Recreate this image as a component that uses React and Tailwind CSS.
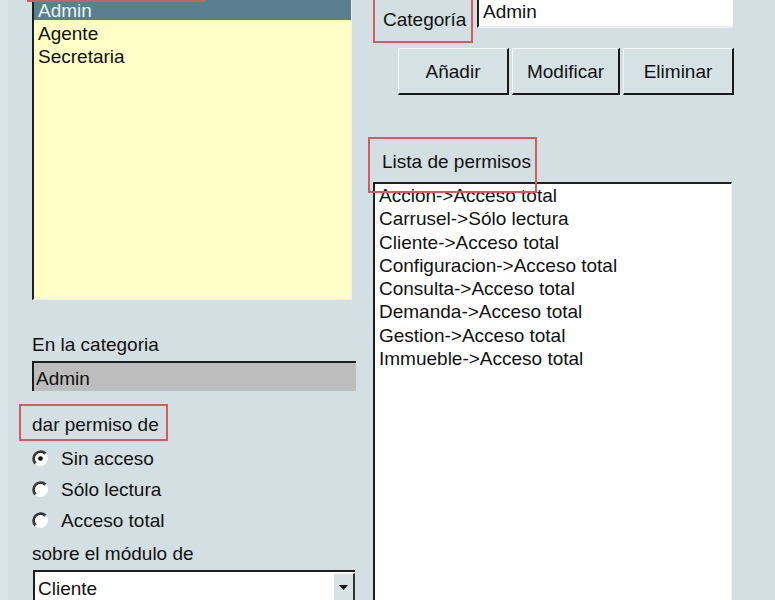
import React from 'react';

const categorias = ['Admin', 'Agente', 'Secretaria'];

const permisos = [
  'Accion->Acceso total',
  'Carrusel->Sólo lectura',
  'Cliente->Acceso total',
  'Configuracion->Acceso total',
  'Consulta->Acceso total',
  'Demanda->Acceso total',
  'Gestion->Acceso total',
  'Immueble->Acceso total',
];

// Win9x style radio button
const Radio = ({ checked }) => (
  <svg width="17" height="17" viewBox="0 0 17 17" className="shrink-0">
    <circle cx="8.5" cy="8.5" r="7.5" fill="#fff" />
    <path d="M13.8 3.2 A7.5 7.5 0 0 0 3.2 13.8" stroke="#3a3a3a" strokeWidth="2" fill="none" />
    <path d="M12.8 4.2 A6 6 0 0 0 4.2 12.8" stroke="#111" strokeWidth="1" fill="none" />
    {checked && <circle cx="8.5" cy="8.5" r="2.3" fill="#000" />}
  </svg>
);

const Boton = ({ label, width }) => (
  <button
    className={`${width} h-[47px] bg-[#d6e2e5] border-t border-l border-t-[#f4f8f9] border-l-[#f4f8f9] border-b-2 border-r-2 border-b-[#1a1a1a] border-r-[#1a1a1a] text-[19px] leading-[23px] text-[#111] flex items-center justify-center`}
  >
    {label}
  </button>
);

export default function App() {
  const opciones = [
    { label: 'Sin acceso', checked: true },
    { label: 'Sólo lectura', checked: false },
    { label: 'Acceso total', checked: false },
  ];

  return (
    <div className="w-[775px] h-[600px] overflow-hidden bg-[#d3dfe2] flex font-['Liberation_Sans',Arial,sans-serif] text-[19px] leading-[23px] text-[#111]">
      {/* Left strip */}
      <div className="w-[8px] bg-[#dbe5e8]" />

      {/* Left column */}
      <div className="w-[352px] pl-[24px] flex flex-col relative">
        <div className="relative shrink-0 -mt-px w-[320px] h-[301px] bg-[#ffffc6] border-l-2 border-l-[#1e1e1e] border-r border-b border-r-[#eef3f4] border-b-[#eef3f4]">
          <div className="absolute left-[-7px] top-[-19px] w-[179px] h-[22px] border-2 border-[#d35c5c] z-10" />
          {categorias.map((c, i) => (
            <div
              key={c}
              className={
                i === 0
                  ? 'h-[21px] mb-[2px] leading-[23px] pl-[4px] bg-[#5b7f8e] text-[#eaf2f4]'
                  : 'h-[23px] leading-[23px] pl-[4px]'
              }
            >
              {c}
            </div>
          ))}
        </div>

        <div className="shrink-0 mt-[33px]">En la categoria</div>
        <div className="shrink-0 mt-[5px] w-[324px] h-[30px] bg-[#bdbdbd] border-t-2 border-l-2 border-[#1e1e1e] pl-[2px] pt-[4px]">
          Admin
        </div>

        <div className="shrink-0 relative mt-[22px]">
          <div className="absolute left-[-13px] top-[-9px] w-[149px] h-[37px] border-2 border-[#d35c5c]" />
          dar permiso de
        </div>

        <div className="shrink-0 mt-[7px] flex flex-col">
          {opciones.map(o => (
            <div key={o.label} className="h-[31px] leading-[31px] flex items-center">
              <Radio checked={o.checked} />
              <span className="ml-[12px]">{o.label}</span>
            </div>
          ))}
        </div>

        <div className="shrink-0 mt-[6px]">sobre el módulo de</div>
        <div className="shrink-0 mt-[5px] ml-px w-[322px] h-[40px] bg-white border-t-2 border-l-2 border-[#1e1e1e] flex">
          <div className="flex-1 pl-[3px] pt-[5px]">Cliente</div>
          <div className="w-[22px] h-[30px] mt-px bg-[#d6e2e5] border-t border-l border-[#f4f8f9] border-r-2 border-b-2 border-r-[#333] border-b-[#333] flex items-center justify-center">
            <svg width="9" height="5" viewBox="0 0 9 5">
              <path d="M0 0 H9 L4.5 5 Z" fill="#111" />
            </svg>
          </div>
        </div>
      </div>

      {/* Right column */}
      <div className="flex-1 flex flex-col">
        <div className="shrink-0 relative -mt-[10px] flex h-[38px]">
          <div className="absolute left-[13px] top-0 w-[100px] h-[53px] border-2 border-[#d35c5c] z-10" />
          <div className="w-[117px] pl-[23px] pt-[18px]">Categoría</div>
          <div className="w-[256px] h-[38px] bg-white border-l-2 border-l-[#1e1e1e] border-b-2 border-b-[#e8eff1] pl-[4px] pt-[10px]">
            Admin
          </div>
        </div>

        <div className="shrink-0 mt-[20px] ml-[38px] flex gap-[3px]">
          <Boton label="Añadir" width="w-[111px]" />
          <Boton label="Modificar" width="w-[108px]" />
          <Boton label="Eliminar" width="w-[111px]" />
        </div>

        <div className="shrink-0 relative mt-[55px] pl-[22px]">
          <div className="absolute left-[8px] top-[-13px] w-[169px] h-[56px] border-2 border-[#d35c5c] z-10" />
          Lista de permisos
        </div>

        <div className="shrink-0 mt-[9px] ml-[13px] w-[359px] h-[430px] bg-white border-t-2 border-l-2 border-[#1e1e1e] border-r border-r-[#eef3f4] pl-[4px]">
          {permisos.map(p => (
            <div key={p} className="leading-[23.3px] whitespace-nowrap">
              {p}
            </div>
          ))}
        </div>
      </div>
    </div>
  );
}
